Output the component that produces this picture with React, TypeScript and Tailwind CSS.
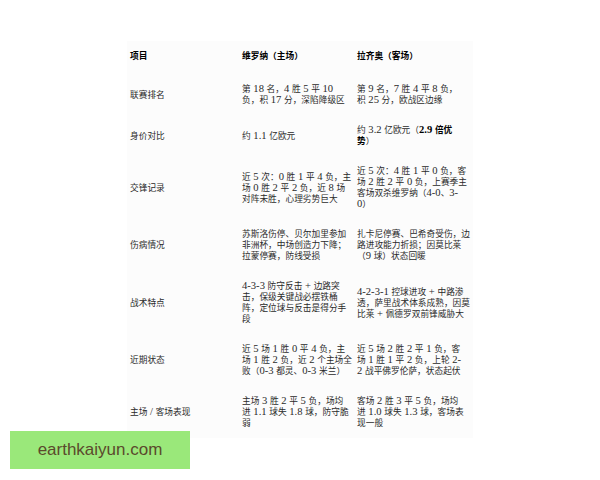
import React from 'react';

// latin runs are set a touch larger than the CJK text, as in the source image
function T({ s }: { s: string }) {
  const parts = s.split(/([\x20-\x7e]+)/);
  return (
    <>
      {parts.map((p, i) =>
        /^[\x20-\x7e]+$/.test(p) ? (
          <span key={i} className="text-[10.6px] leading-[0px]">
            {p}
          </span>
        ) : (
          <React.Fragment key={i}>{p}</React.Fragment>
        )
      )}
    </>
  );
}

type Row = { label: string; home: React.ReactNode[]; away: React.ReactNode[] };

const rows: Row[] = [
  {
    label: '联赛排名',
    home: ['第 18 名，4 胜 5 平 10', '负，积 17 分，深陷降级区'],
    away: ['第 9 名，7 胜 4 平 8 负，', '积 25 分，欧战区边缘'],
  },
  {
    label: '身价对比',
    home: ['约 1.1 亿欧元'],
    away: [
      <>
        <T s="约 3.2 亿欧元（" />
        <b className="font-bold text-black">
          <T s="2.9 倍优" />
        </b>
      </>,
      <>
        <b className="font-bold text-black">势</b>）
      </>,
    ],
  },
  {
    label: '交锋记录',
    home: ['近 5 次：0 胜 1 平 4 负，主', '场 0 胜 2 平 2 负，近 8 场', '对阵未胜，心理劣势巨大'],
    away: ['近 5 次：4 胜 1 平 0 负，客', '场 2 胜 2 平 0 负，上赛季主', '客场双杀维罗纳（4-0、3-', '0）'],
  },
  {
    label: '伤病情况',
    home: ['苏斯洛伤停、贝尔加里参加', '非洲杯，中场创造力下降；', '拉蒙停赛，防线受损'],
    away: ['扎卡尼停赛、巴希奇受伤，边', '路进攻能力折损；因莫比莱', '（9 球）状态回暖'],
  },
  {
    label: '战术特点',
    home: ['4-3-3 防守反击 + 边路突', '击，保级关键战必摆铁桶', '阵，定位球与反击是得分手', '段'],
    away: ['4-2-3-1 控球进攻 + 中路渗', '透，萨里战术体系成熟，因莫', '比莱 + 佩德罗双前锋威胁大'],
  },
  {
    label: '近期状态',
    home: ['近 5 场 1 胜 0 平 4 负，主', '场 1 胜 2 负，近 2 个主场全', '败（0-3 都灵、0-3 米兰）'],
    away: ['近 5 场 2 胜 2 平 1 负，客', '场 1 胜 1 平 2 负，上轮 2-', '2 战平佛罗伦萨，状态起伏'],
  },
  {
    label: '主场 / 客场表现',
    home: ['主场 3 胜 2 平 5 负，场均', '进 1.1 球失 1.8 球，防守脆', '弱'],
    away: ['客场 2 胜 3 平 5 负，场均', '进 1.0 球失 1.3 球，客场表', '现一般'],
  },
];

function Cell({ lines }: { lines: React.ReactNode[] }) {
  return (
    <div className="pl-[3px]">
      {lines.map((l, i) => (
        <div key={i} className="whitespace-nowrap h-[11px]">
          {typeof l === 'string' ? <T s={l} /> : l}
        </div>
      ))}
    </div>
  );
}

const font = { fontFamily: '"Liberation Serif", "Noto Sans CJK SC", serif' };

export default function App() {
  return (
    <div className="relative w-[600px] h-[480px] bg-white overflow-hidden">
      {/* table */}
      <div className="ml-[127px] pt-[41px] w-[346px]">
        <div className="bg-[#fcfcfc] text-[8.7px] leading-[11px] text-[#2a2a2a]" style={font}>
          <div className="grid grid-cols-[112px_115px_119px] pt-[10px] pb-[12px] font-bold text-black">
            <div className="pl-[3px]">项目</div>
            <div className="pl-[3px]">维罗纳（主场）</div>
            <div className="pl-[3px]">拉齐奥（客场）</div>
          </div>
          {rows.map((r) => (
            <div key={r.label} className="grid grid-cols-[112px_115px_119px] items-center pt-[10px] pb-[9px]">
              <div className="pl-[3px]">
                <T s={r.label} />
              </div>
              <Cell lines={r.home} />
              <Cell lines={r.away} />
            </div>
          ))}
        </div>
      </div>

      {/* watermark */}
      <div className="absolute left-[10px] top-[431px] w-[180px] h-[38px] bg-[#9ae87a] flex items-center justify-center">
        <span className="text-[17px] text-[#5b4a2c]" style={{ fontFamily: '"Liberation Sans", Arial, sans-serif' }}>
          earthkaiyun.com
        </span>
      </div>
    </div>
  );
}
